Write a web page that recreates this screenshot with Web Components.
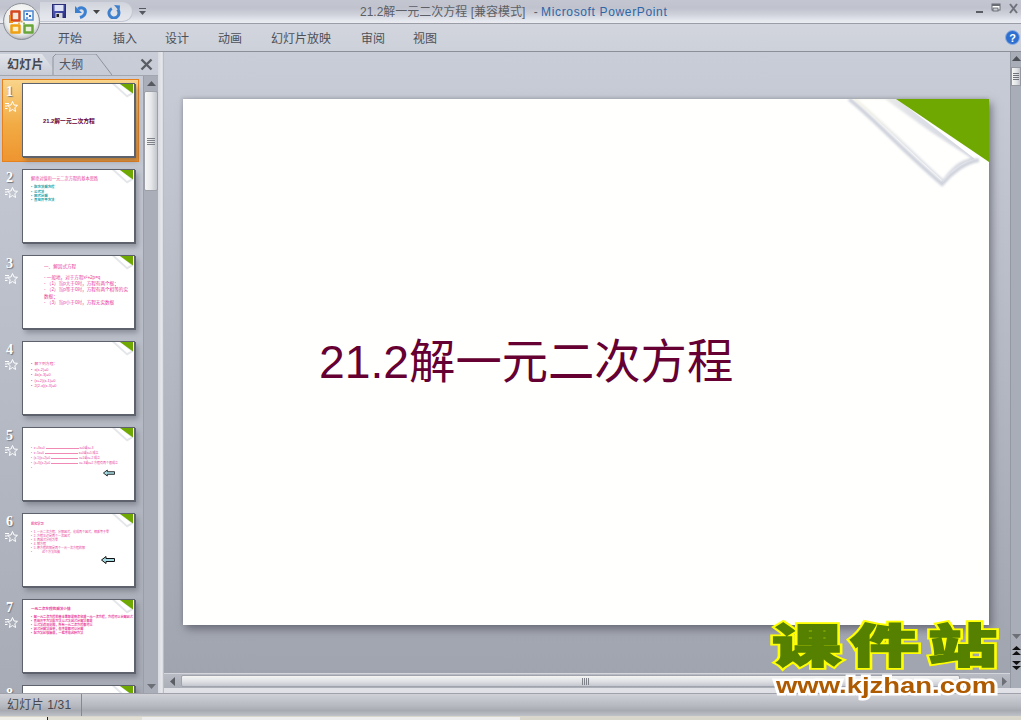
<!DOCTYPE html>
<html lang="zh">
<head>
<meta charset="utf-8">
<title>PowerPoint</title>
<style>
html, body { margin: 0; height: 100%; overflow: hidden; }
body { font-family: "Liberation Sans", "Noto Sans CJK SC", sans-serif; }
ppt-thumb i { display: inline-block; width: 29px; height: 1px; background: #f08ab4; vertical-align: middle; margin: 0 1px; }
</style>
</head>
<body>
<ppt-app>
  <ppt-titlebar slot="top">21.2解一元二次方程 [兼容模式]</ppt-titlebar>
  <ppt-tabs slot="top"></ppt-tabs>
  <ppt-panel slot="left">
    <ppt-thumb n="1" selected pad="32px 0 0 20px">
      <p style="font:bold 5.8px 'Liberation Sans','Noto Sans CJK SC',sans-serif;color:#660033">21.2解一元二次方程</p>
    </ppt-thumb>
    <ppt-thumb n="2" pad="7px 0 0 8px">
      <p style="color:#e8409a;font-size:4.2px;margin-bottom:4px">解绝对值和一元二次方程的基本思路</p>
      <p class="t">• &nbsp;配方法解方程</p>
      <p class="t">• &nbsp;公式法</p>
      <p class="t">• &nbsp;因式分解</p>
      <p class="t">• &nbsp;直接开平方法</p>
    </ppt-thumb>
    <ppt-thumb n="3" pad="8px 0 0 21px">
      <p style="margin-bottom:5px;font-size:4.600px;line-height:6px">一、解因式方程</p>
      <p class="w">- 一般地，对于方程x²+2p=q</p>
      <p class="w">- （1）当p大于0时，方程有两个根；</p>
      <p class="w">- （2）当p等于0时，方程有两个相等的实数根；</p>
      <p class="w">- （3）当p小于0时，方程无实数根</p>
    </ppt-thumb>
    <ppt-thumb n="4" pad="20px 0 0 8px">
      <p class="s">• &nbsp;解下列方程：</p>
      <p class="s">• &nbsp;x(x-2)=0</p>
      <p class="s">• &nbsp;4x(x-3)=0</p>
      <p class="s">• &nbsp;(x+2)(x-1)=0</p>
      <p class="s">• &nbsp;2(2-x)(x-3)=0</p>
    </ppt-thumb>
    <ppt-thumb n="5" pad="18px 0 0 8px" arrow="80,41,12">
      <p class="u">• &nbsp;x²+3x=0<i style="width:33px"></i>x=0或x=-3</p>
      <p class="u">• &nbsp;x²-5x=0<i style="width:33px"></i>x=0或x=5 成立</p>
      <p class="u">• &nbsp;(x-1)(x+2)=0<i style="width:27px"></i>x=1或x=-2 成立</p>
      <p class="u">• &nbsp;(x+3)(x-2)=0<i style="width:27px"></i>x=-3或x=2 方程有两个根成立</p>
      <p class="u">•</p>
    </ppt-thumb>
    <ppt-thumb n="6" pad="8px 0 0 8px" arrow="78,42,14">
      <p style="font-size:3.200px;margin-bottom:4px;font-weight:bold">探究学习</p>
      <p class="n">• &nbsp;1. 一元二次方程，分解因式，化成两个因式，相乘等于零</p>
      <p class="n">• &nbsp;2. 方程左边是两个一次因式</p>
      <p class="n">• &nbsp;3. 两因式分别为零</p>
      <p class="n">• &nbsp;4. 解方程</p>
      <p class="n">• &nbsp;5. 原方程的解是两个一元一次方程的解</p>
      <p class="n">• &emsp;&emsp;&emsp;这个方法叫做</p>
    </ppt-thumb>
    <ppt-thumb n="7" pad="7px 0 0 8px">
      <p style="font-size:3.600px;margin-bottom:4px;font-weight:bold">一元二次方程的解法小结</p>
      <p class="d">• &nbsp;解一元二次方程的基本思想是降次化成一元一次方程，方程可以分解因式</p>
      <p class="d">• &nbsp;直接开平方法配方法公式法因式分解法都是</p>
      <p class="d">• &nbsp;公式法适用范围，所有一元二次方程都可以</p>
      <p class="d">• &nbsp;因式分解法简单，但不是都可以分解</p>
      <p class="d">• &nbsp;配方法比较麻烦，一般不用这种方法</p>
    </ppt-thumb>
    <ppt-thumb n="8" pad="8px 0 0 8px"></ppt-thumb>
  </ppt-panel>
  <ppt-stage slot="main">21.2解一元二次方程</ppt-stage>
  <ppt-statusbar slot="bottom">幻灯片 1/31</ppt-statusbar>
  <ppt-watermark></ppt-watermark>
</ppt-app>

<script>
const CJK = `"Liberation Sans", "Noto Sans CJK SC", sans-serif`;

class PptApp extends HTMLElement {
    constructor() {
        super();
        this.attachShadow({mode: "open"}).innerHTML = `
        <style>
        :host { display: flex; flex-direction: column; width: 1021px; height: 720px; position: relative; overflow: hidden; background: #c9cdd7; }
        .mid { flex: 1; display: flex; min-height: 0; }
        .split { width: 6px; background: linear-gradient(90deg, #d9dbe2, #e6e8ec 70%, #a9adb7); flex: none; }
        </style>
        <slot name="top"></slot>
        <div class="mid">
            <slot name="left"></slot>
            <div class="split"></div>
            <slot name="main"></slot>
        </div>
        <slot name="bottom"></slot>
        <slot></slot>`;
    }
}

class PptTitlebar extends HTMLElement {
    constructor() {
        super();
        this.attachShadow({mode: "open"}).innerHTML = `
        <style>
        :host { display: flex; height: 24px; position: relative; box-sizing: border-box; border-bottom: 1px solid #9a9da6;
                background: linear-gradient(180deg, #c3c7d0 0, #c0c3cd 35%, #ced1da 62%, #e6e8ef 90%, #eaecf2 100%);
                font: 12px ${CJK}; color: #5c5f66; }
        .qat { position: absolute; left: 40px; top: 1px; width: 93px; height: 21px; border-radius: 0 12px 12px 0;
               border: 1px solid #c2c6d0; border-left: 0; box-sizing: border-box; background: linear-gradient(180deg, #d0d3db, #dfe2e8 60%, #e6e8ee); }
        .orb { position: absolute; left: 3px; top: 3px; z-index: 2; }
        svg.i { position: absolute; }
        .title { padding: 4px 0 0 360px; line-height: 17px; white-space: pre; }
        .title span { margin-left: 5px; }
        .title b { font-weight: normal; color: #2f66a6; letter-spacing: .65px; }
        </style>
        <svg class="orb" width="38" height="38" viewBox="0 0 38 38">
            <defs>
                <radialGradient id="g" cx=".5" cy=".4" r=".62"><stop offset="0" stop-color="#fff"/><stop offset=".72" stop-color="#eceded"/><stop offset=".9" stop-color="#c4c6cb"/><stop offset="1" stop-color="#8f939a"/></radialGradient>
            </defs>
            <circle cx="18.500" cy="18.500" r="18" fill="url(#g)" stroke="#8b8f96"/>
            <path d="M8.500 8.500h8v9h-8z" fill="#f4e9d8" stroke="#d5481f" stroke-width="2.500" stroke-linejoin="round"/>
            <path d="M7 12v7h3" fill="none" stroke="#ef8a1c" stroke-width="2"/>
            <rect x="21" y="8" width="9" height="9" fill="#f2f5fb" stroke="#4d87cf" stroke-width="1.500"/>
            <rect x="23" y="10" width="2" height="2" fill="#2f6fc8"/><rect x="26" y="12" width="2" height="2" fill="#2f6fc8"/><rect x="23" y="14" width="2" height="2" fill="#74a5de"/>
            <path d="M8.500 22.500h8v7h-8z" fill="#fbeecb" stroke="#eea010" stroke-width="2.500" stroke-linejoin="round"/>
            <path d="M21.500 22.500h8v7h-8z" fill="#e9f0dc" stroke="#69a63a" stroke-width="2.500" stroke-linejoin="round"/>
            <rect x="17.500" y="17.500" width="2" height="2" fill="#d8a23e"/><rect x="20" y="19.500" width="2" height="2" fill="#8db45a"/><rect x="15" y="19.500" width="2" height="2" fill="#e8b84c"/>
        </svg>
        <div class="qat"></div>
        <svg class="i" style="left:52px;top:4px" width="15" height="15" viewBox="0 0 15 15">
            <defs><linearGradient id="s" x1="0" y1="0" x2="1" y2="1"><stop offset="0" stop-color="#5a64c8"/><stop offset="1" stop-color="#272f80"/></linearGradient></defs>
            <rect x=".5" y=".5" width="13" height="13" fill="url(#s)" stroke="#2a2f78"/>
            <rect x="2.500" y="1" width="9" height="6" fill="#dde2f4"/>
            <rect x="3.500" y="9" width="7" height="5" fill="#d4d6de"/><rect x="4.500" y="10" width="2.500" height="3" fill="#222"/>
        </svg>
        <svg class="i" style="left:74px;top:5px" width="14" height="14" viewBox="0 0 14 14">
            <path d="M4 4C8 1.500 12 3.500 11.300 7.500 10.900 10 8.500 11.800 6 12.500" fill="none" stroke="#3a7fd0" stroke-width="3"/>
            <path d="M1 1v7h7z" fill="#3a7fd0"/>
        </svg>
        <svg class="i" style="left:93px;top:10px" width="7" height="4" viewBox="0 0 7 4"><path d="M0 0h7L3.500 4z" fill="#444"/></svg>
        <svg class="i" style="left:107px;top:5px" width="14" height="14" viewBox="0 0 14 14">
            <path d="M4.800 3.500A5 5 0 1 0 10.500 4.500" fill="none" stroke="#3f80cc" stroke-width="3"/>
            <path d="M7 0l6 .5-.5 6z" fill="#3f80cc"/>
        </svg>
        <svg class="i" style="left:139px;top:8px" width="7" height="7" viewBox="0 0 7 7"><path d="M0 0h7v1H0zM0 3h7L3.500 7z" fill="#55585f"/></svg>
        <div class="title"><slot></slot> <span>-</span> <b>Microsoft PowerPoint</b></div>
        <svg class="i" style="left:975px;top:3px" width="44" height="12" viewBox="0 0 44 12">
            <rect x="1" y="8" width="7" height="2" fill="#5a5d64"/>
            <rect x="17" y="1" width="8" height="6" fill="#fff" stroke="#6a6d75"/><rect x="17" y="1" width="8" height="2" fill="#6a6d75"/>
            <rect x="18" y="5" width="5" height="3" fill="#c9ccd4" stroke="#5a5d64" stroke-width=".8"/>
            <path d="M35 1l7 9M42 1l-7 9" stroke="#70737b" stroke-width="2"/>
        </svg>`;
    }
}

class PptTabs extends HTMLElement {
    constructor() {
        super();
        const labels = [["开始", 58], ["插入", 113], ["设计", 165], ["动画", 218], ["幻灯片放映", 271], ["审阅", 361], ["视图", 413]];
        this.attachShadow({mode: "open"}).innerHTML = `
        <style>
        :host { display: flex; height: 28px; box-sizing: border-box; border-bottom: 1px solid #8c8f97; position: relative;
                background: linear-gradient(180deg, #d2d5de, #cdd1da); font: 12px ${CJK}; color: #4d5057; }
        nav { display: flex; padding: 7px 0 0 58px; line-height: 16px; }
        span { white-space: nowrap; }
        svg { position: absolute; left: 1005px; top: 6px; }
        </style>
        <nav>${labels.map((l, i) => {
            const next = labels[i + 1];
            const w = next ? next[1] - l[1] : 30;
            return `<span style="width:${w}px">${l[0]}</span>`;
        }).join("")}</nav>
        <svg width="15" height="15" viewBox="0 0 15 15">
            <circle cx="7.500" cy="7.500" r="7" fill="#2f6fd0" stroke="#8fb0e4"/>
            <text x="7.500" y="11.500" text-anchor="middle" fill="#fff" font-size="11" font-weight="bold" font-family="Liberation Sans">?</text>
        </svg>`;
    }
}

class PptPanel extends HTMLElement {
    constructor() {
        super();
        this.attachShadow({mode: "open"}).innerHTML = `
        <style>
        :host { display: flex; flex-direction: column; width: 158px; flex: none; background: linear-gradient(180deg, #c9cdd7, #a7abb5); font: 12px ${CJK}; }
        .head { height: 24px; flex: none; box-sizing: border-box; border-bottom: 1px solid #a2a6ae; position: relative; display: flex; padding: 2px 0 0 0; }
        .tab { height: 21px; box-sizing: border-box; font-weight: bold; color: #45484f; line-height: 23px; letter-spacing: .3px; padding-left: 7px; width: 58px;
               clip-path: polygon(0 0, 42px 0, 100% 100%, 0 100%); background: linear-gradient(180deg, #e2e4ea, #c8ccd6); }
        .tab.off { position: absolute; left: 52px; top: 2px; width: 60px; font-weight: normal; color: #53565d; padding-left: 7px;
               clip-path: none; background: none; }
        .tab.off svg { position: absolute; left: 0; top: 0; }
        .x { position: absolute; left: 140px; top: 6px; }
        .body { flex: 1; display: flex; min-height: 0; }
        .list { flex: 1; min-width: 0; overflow: hidden; padding-top: 3px; }
        .bar { width: 14px; flex: none; border-left: 1px solid #9a9ea8; background: #aaaeb8; position: relative; }
        .up, .down { position: absolute; left: 3px; }
        .up { top: 5px; }
        .down { bottom: 4px; }
        .thumb { position: absolute; left: 0; right: 0; top: 15px; height: 100px; box-sizing: border-box; border: 1px solid #9da0a8; border-radius: 2px;
                 background: linear-gradient(90deg, #f6f6f4, #e6e8ea 50%, #c2c5cb); }
        .grip { position: absolute; left: 2px; right: 2px; top: 46px; height: 7px;
                background: repeating-linear-gradient(180deg, #7f8289 0 1px, transparent 1px 2px); }
        </style>
        <div class="head">
            <div class="tab">幻灯片</div>
            <div class="tab off">
                <svg width="60" height="21" viewBox="0 0 60 21"><path d="M1 21L1 3 4 0H44L60 21" fill="none" stroke="#8e929a"/></svg>
                <span style="position:relative">大纲</span>
            </div>
            <svg class="x" width="13" height="13" viewBox="0 0 13 13"><path d="M1.500 1.500l10 10M11.500 1.500l-10 10" stroke="#5a5d64" stroke-width="2.400"/></svg>
        </div>
        <div class="body">
            <div class="list"><slot></slot></div>
            <div class="bar">
                <svg class="up" width="9" height="5" viewBox="0 0 9 5"><path d="M0 5h9L4.500 0z" fill="#56595f"/></svg>
                <div class="thumb"><div class="grip"></div></div>
                <svg class="down" width="9" height="5" viewBox="0 0 9 5"><path d="M0 0h9L4.500 5z" fill="#6c6f76"/></svg>
            </div>
        </div>`;
    }
}

class PptThumb extends HTMLElement {
    constructor() {
        super();
        const n = this.getAttribute("n");
        const pad = this.getAttribute("pad") || "0";
        const arrow = (this.getAttribute("arrow") || "").split(",");
        this.attachShadow({mode: "open"}).innerHTML = `
        <style>
        :host { display: block; height: 86px; width: 144px; box-sizing: border-box; position: relative; }
        :host([selected]) .row { background: linear-gradient(180deg, #f9d48a, #f2ab44 55%, #ee9530); border: 1px solid #e7811c; }
        .row { position: absolute; left: 2px; top: 0; width: 137px; height: 83px; box-sizing: border-box; border: 1px solid transparent; }
        .num { position: absolute; left: 3px; top: 4px; font: bold 14px/15px "Liberation Serif", serif; color: #fff; text-shadow: 1px 1px 1px #6f737b; }
        svg.star { position: absolute; left: 2px; top: 21px; }
        .page { position: absolute; left: 19px; top: 3px; width: 113px; height: 74px; box-sizing: border-box; padding: ${pad};
                background: #fff; border: 1px solid #5d626c; box-shadow: 1px 1px 0 #5d626c, 3px 4px 5px rgba(70,74,84,.4); overflow: hidden; }
        svg.fold { position: absolute; right: 0; top: 0; }
        svg.arrow { position: absolute; }
        ::slotted(p) { margin: 0; white-space: nowrap; font: 3.400px/4.300px ${CJK}; color: #e8409a; }
        ::slotted(p.t) { color: #12a0a8; font-weight: bold; }
        ::slotted(p.w) { font-size: 4.600px; line-height: 6.200px; white-space: normal; padding-right: 2px; }
        ::slotted(p.s) { font-size: 3.800px; line-height: 5.500px; }
        ::slotted(p.u) { line-height: 5px; font-size: 3px; }
        ::slotted(p.n) { font-size: 3px; line-height: 4px; }
        ::slotted(p.d) { font-size: 3.100px; line-height: 4px; font-weight: bold; }
        </style>
        <div class="row">
            <div class="num">${n}</div>
            <svg class="star" width="13" height="12" viewBox="0 0 13 12">
                <path d="M0 2.500h4M0 5h2.500M0 7.500h2.500" stroke="#fff"/>
                <path d="M7.500 .5l1.500 3.500 3.500 .3-2.700 2.400.8 3.800-3.100-2-3.100 2 .8-3.800-2.700-2.400 3.500-.3z" fill="none" stroke="#fff"/>
            </svg>
            <div class="page">
                <slot></slot>
                <svg class="fold" width="22" height="14" viewBox="0 0 22 14">
                    <path d="M0 0L15 13.500 21 10V0z" fill="#e4e6ea"/>
                    <path d="M3 0L15 11 19 9 8 0z" fill="#fff"/>
                    <path d="M8 0L21 9.500V0z" fill="#6ea800"/>
                </svg>
                ${arrow.length === 3 ? `<svg class="arrow" style="left:${arrow[0]}px;top:${arrow[1]}px" width="${arrow[2]}" height="8" viewBox="0 0 14 8">
                    <path d="M.5 4L5 .5v2h8.500v3H5v2z" fill="#a5dbe4" stroke="#111" stroke-width="1"/>
                </svg>` : ""}
            </div>
        </div>`;
    }
}

class PptStage extends HTMLElement {
    constructor() {
        super();
        this.attachShadow({mode: "open"}).innerHTML = `
        <style>
        :host { flex: 1; min-width: 0; display: grid; grid-template-columns: 1fr 11px; grid-template-rows: 1fr 15px 5px;
                background: linear-gradient(180deg, #c9cdd7, #9fa3ad); }
        .stage { padding: 47px 0 0 19px; min-height: 0; overflow: hidden; }
        .slide { width: 806px; height: 526px; background: #fffffd; position: relative; box-sizing: border-box; padding: 233px 0 0 136px;
                 box-shadow: 3px 4px 8px rgba(60,62,72,.55), -1px -1px 3px rgba(90,94,104,.25); }
        .txt { font: 46.300px/60px "Liberation Sans", "Noto Sans CJK SC", sans-serif; color: #660033; white-space: nowrap; }
        .fold { position: absolute; right: 0; top: 0; }
        .v { grid-row: 1 / 3; grid-column: 2; background: #a9adb7; border-left: 1px solid #9498a2; position: relative; }
        .v > * { position: absolute; }
        .vthumb { left: 0; right: 0; top: 15px; height: 19px; background: linear-gradient(90deg, #f6f6f4, #dfe1e5 60%, #c2c5cb); border: 1px solid #94979f; box-sizing: border-box; }
        .vgrip { left: 2px; right: 2px; top: 21px; height: 7px; background: repeating-linear-gradient(180deg, #6f7279 0 1px, transparent 1px 2px); }
        .h { background: linear-gradient(180deg, #b8bbc4, #abafb8); border-top: 1px solid #d4d6db; position: relative; box-sizing: border-box; }
        .h > * { position: absolute; }
        .hthumb { left: 17px; right: 50px; top: 1px; height: 12px; background: linear-gradient(180deg, #f5f5f3, #dee0e4 55%, #c4c7ce); border: 1px solid #a0a3ab; box-sizing: border-box; border-radius: 2px; }
        .hgrip { left: 418px; top: 4px; width: 7px; height: 7px; background: repeating-linear-gradient(90deg, #7f8289 0 1px, transparent 1px 2px); }
        .strip { grid-column: 1 / 3; background: #dfe1e6; }
        </style>
        <div class="stage">
            <div class="slide">
                <div class="txt"><slot></slot></div>
                <svg class="fold" width="146" height="92" viewBox="0 0 146 92">
                    <defs>
                        <linearGradient id="e" x1="0" y1="0" x2="1" y2="0"><stop offset="0" stop-color="#f5f4e8"/><stop offset=".5" stop-color="#dfe1e8"/><stop offset="1" stop-color="#d4d6e0"/></linearGradient>
                        <filter id="b" x="-10%" y="-10%" width="120%" height="120%"><feGaussianBlur stdDeviation=".9"/></filter>
                    </defs>
                    <path d="M6 0C28 17 56 48 99 85C108 74 122 63 136 61" fill="none" stroke="#cfd2dc" stroke-width="4" filter="url(#b)"/>
                    <path d="M10 0C30 16 60 46 100 82C108 72 118 63 132 60L54 0z" fill="url(#e)"/>
                    <path d="M14 0H42L88 33 128 59C114 62 107 71 100 80 82 64 42 24 14 0z" fill="#fffffd" filter="url(#b)"/>
                    <path d="M53 0H146V63z" fill="#6ea800"/>
                </svg>
            </div>
        </div>
        <div class="v">
            <svg style="left:1px;top:4px" width="9" height="5" viewBox="0 0 9 5"><path d="M0 5h9L4.500 0z" fill="#4d5056"/></svg>
            <div class="vthumb"></div>
            <div class="vgrip"></div>
            <svg style="left:1px;top:582px" width="9" height="5" viewBox="0 0 9 5"><path d="M0 0h9L4.500 5z" fill="#6c6f76"/></svg>
            <svg style="left:1px;top:594px" width="9" height="10" viewBox="0 0 9 10"><path d="M0 4h9L4.500 0zM0 9h9L4.500 5z" fill="#111"/></svg>
            <svg style="left:1px;top:608px" width="9" height="10" viewBox="0 0 9 10"><path d="M0 1h9L4.500 5zM0 6h9L4.500 10z" fill="#111"/></svg>
        </div>
        <div class="h">
            <svg style="left:6px;top:3px" width="5" height="9" viewBox="0 0 5 9"><path d="M5 0v9L0 4.500z" fill="#5a5d64"/></svg>
            <div class="hthumb"></div>
            <div class="hgrip"></div>
            <svg style="right:3px;top:3px" width="5" height="9" viewBox="0 0 5 9"><path d="M0 0v9l5-4.500z" fill="#6c6f76"/></svg>
        </div>
        <div class="strip"></div>`;
    }
}

class PptStatusbar extends HTMLElement {
    constructor() {
        super();
        this.attachShadow({mode: "open"}).innerHTML = `
        <style>
        :host { display: block; height: 27px; flex: none; font: 12px ${CJK}; color: #45484f; background: #d9d6cb; }
        .bar { height: 23px; display: flex; box-sizing: border-box; border-top: 1px solid #9fa2aa;
               background: linear-gradient(180deg, #cfd1d7, #b5b8bf 55%, #a7aab1 75%, #bfc2c8); }
        .cell { width: 82px; box-sizing: border-box; padding: 1px 0 0 7px; line-height: 20px; border-right: 1px solid #85888f; letter-spacing: .2px; }
        .tray { height: 4px; margin-top: 1px; background: linear-gradient(90deg, #f0efe8 0 47px, #23252a 47px 48px, #e2dfd4 48px 142px, #eee 142px 520px, #d9d6cb 520px); }
        </style>
        <div class="bar"><div class="cell"><slot></slot></div></div>
        <div class="tray"></div>`;
    }
}

class PptWatermark extends HTMLElement {
    constructor() {
        super();
        this.attachShadow({mode: "open"}).innerHTML = `
        <style>
        :host { position: absolute; left: 772px; top: 620px; width: 240px; display: block; pointer-events: none; }
        .cn { position: relative; z-index: 0; height: 52px; font: 900 46px/52px "Liberation Sans", "Noto Sans CJK SC", sans-serif; letter-spacing: 6px; color: #558000;
              -webkit-text-stroke: 1.500px #558000; white-space: nowrap; transform: scaleX(1.5); transform-origin: 0 0; }
        .cn::before { content: "课件站"; position: absolute; left: 0; top: 0; z-index: -1; color: #ffff00; -webkit-text-stroke: 5px #ffff00; }
        .en { font: bold 22.500px/26px "Liberation Sans", sans-serif; color: #ad5a00; margin: 1px 0 0 4px; white-space: nowrap;
              -webkit-text-stroke: 5px #fff; paint-order: stroke fill; transform: scaleX(1.22); transform-origin: 0 0; }
        </style>
        <div class="cn">课件站</div>
        <div class="en">www.kjzhan.com</div>`;
    }
}

customElements.define("ppt-app", PptApp);
customElements.define("ppt-titlebar", PptTitlebar);
customElements.define("ppt-tabs", PptTabs);
customElements.define("ppt-panel", PptPanel);
customElements.define("ppt-thumb", PptThumb);
customElements.define("ppt-stage", PptStage);
customElements.define("ppt-statusbar", PptStatusbar);
customElements.define("ppt-watermark", PptWatermark);
</script>
</body>
</html>
